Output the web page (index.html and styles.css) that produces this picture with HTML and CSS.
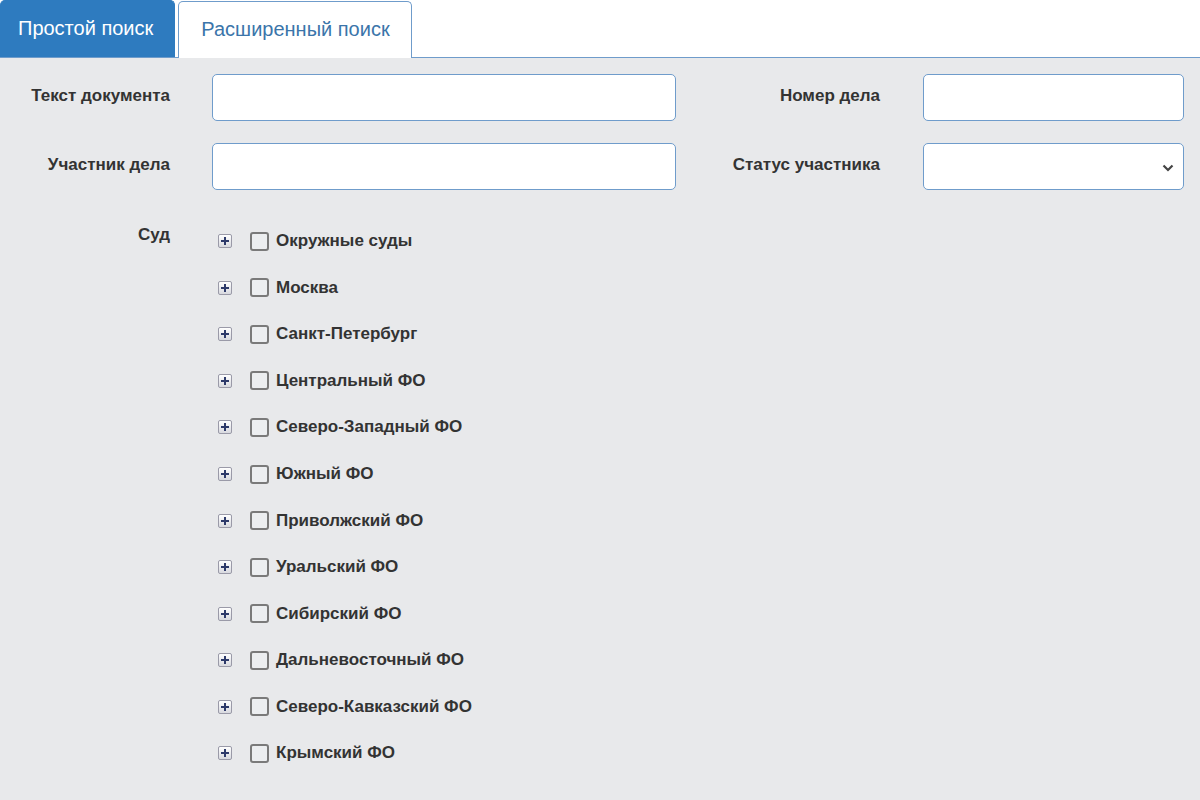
FILE: index.html
```html
<!DOCTYPE html>
<html lang="ru">
<head>
<meta charset="utf-8">
<title>Поиск</title>
<link rel="stylesheet" href="styles.css">
</head>
<body>
<div class="tabs">
  <div class="tab active">Простой поиск</div>
  <div class="tab">Расширенный поиск</div>
</div>
<div class="panel">
  <div class="form">
    <label class="lbl">Текст документа</label>
    <div class="input"></div>
    <label class="lbl">Номер дела</label>
    <div class="input"></div>

    <label class="lbl">Участник дела</label>
    <div class="input"></div>
    <label class="lbl">Статус участника</label>
    <div class="input select">
      <svg class="chev" width="12" height="8" viewBox="0 0 12 8"><path d="M1.5 1.5 L6 6 L10.5 1.5" fill="none" stroke="#444" stroke-width="2.2"/></svg>
    </div>

    <label class="lbl lbl-top">Суд</label>
    <ul class="tree">
      <li class="node"><span class="exp"></span><span class="cb"></span><span class="name">Окружные суды</span></li>
      <li class="node"><span class="exp"></span><span class="cb"></span><span class="name">Москва</span></li>
      <li class="node"><span class="exp"></span><span class="cb"></span><span class="name">Санкт-Петербург</span></li>
      <li class="node"><span class="exp"></span><span class="cb"></span><span class="name">Центральный ФО</span></li>
      <li class="node"><span class="exp"></span><span class="cb"></span><span class="name">Северо-Западный ФО</span></li>
      <li class="node"><span class="exp"></span><span class="cb"></span><span class="name">Южный ФО</span></li>
      <li class="node"><span class="exp"></span><span class="cb"></span><span class="name">Приволжский ФО</span></li>
      <li class="node"><span class="exp"></span><span class="cb"></span><span class="name">Уральский ФО</span></li>
      <li class="node"><span class="exp"></span><span class="cb"></span><span class="name">Сибирский ФО</span></li>
      <li class="node"><span class="exp"></span><span class="cb"></span><span class="name">Дальневосточный ФО</span></li>
      <li class="node"><span class="exp"></span><span class="cb"></span><span class="name">Северо-Кавказский ФО</span></li>
      <li class="node"><span class="exp"></span><span class="cb"></span><span class="name">Крымский ФО</span></li>
    </ul>
  </div>
</div>
</body>
</html>
```

FILE: styles.css
```css
html, body {
  margin: 0;
  padding: 0;
  height: 100%;
}
body {
  font-family: "Liberation Sans", Arial, sans-serif;
  background: #e8e9eb;
  color: #333;
  display: flex;
  flex-direction: column;
}
.tabs {
  background: #fff;
  display: flex;
  align-items: flex-end;
  gap: 3px;
  height: 57px;
  border-bottom: 1px solid #6f9ccb;
}
.tab {
  box-sizing: border-box;
  display: flex;
  align-items: center;
  font-size: 20px;
  padding: 0 21px 2px 22px;
  color: #3b75aa;
  background: #fff;
  border: 1px solid #6f9ccb;
  border-bottom: none;
  border-radius: 5px 5px 0 0;
  margin-bottom: -1px;
  height: 57px;
}
.tab.active {
  background: #2e7bbf;
  color: #fff;
  border-color: #2e7bbf;
  padding: 0 21px 2px 17px;
  height: 57px;
  margin-bottom: 0;
}
.panel {
  flex: 1;
  padding: 16px 16px 0 0;
}
.form {
  display: grid;
  grid-template-columns: 170px 464px 163px 261px;
  column-gap: 42px;
  row-gap: 22px;
  align-items: center;
}
.lbl {
  font-weight: bold;
  font-size: 17px;
  text-align: right;
  color: #333;
  margin-top: -3px;
}
.lbl:nth-of-type(2n) {
  margin-right: 1px;
}
.input {
  height: 47px;
  box-sizing: border-box;
  background: #fff;
  border: 1px solid #6f9ccb;
  border-radius: 5px;
  position: relative;
}
.select .chev {
  position: absolute;
  right: 9px;
  top: 20px;
}
.lbl-top {
  align-self: start;
  margin-top: 13px;
}
.tree {
  grid-column: 2 / span 3;
  list-style: none;
  margin: 6px 0 0 0;
  padding: 0 0 0 6px;
}
.node {
  height: 46.55px;
  display: flex;
  align-items: center;
}
.exp {
  width: 12px;
  height: 12px;
  border: 1px solid #9a9aa8;
  border-radius: 2px;
  background: linear-gradient(#ffffff, #d8d9df);
  position: relative;
  margin-right: 18px;
}
.exp::before, .exp::after {
  content: "";
  position: absolute;
  background: #2d3a6a;
}
.exp::before {
  left: 2px;
  top: 5px;
  width: 8px;
  height: 2px;
}
.exp::after {
  left: 5px;
  top: 2px;
  width: 2px;
  height: 8px;
}
.cb {
  width: 19px;
  height: 19px;
  box-sizing: border-box;
  border: 2px solid #7a7a7a;
  border-radius: 3px;
  background: #eceef0;
  margin-right: 7px;
}
.name {
  font-weight: bold;
  font-size: 17px;
  color: #333;
}
```
